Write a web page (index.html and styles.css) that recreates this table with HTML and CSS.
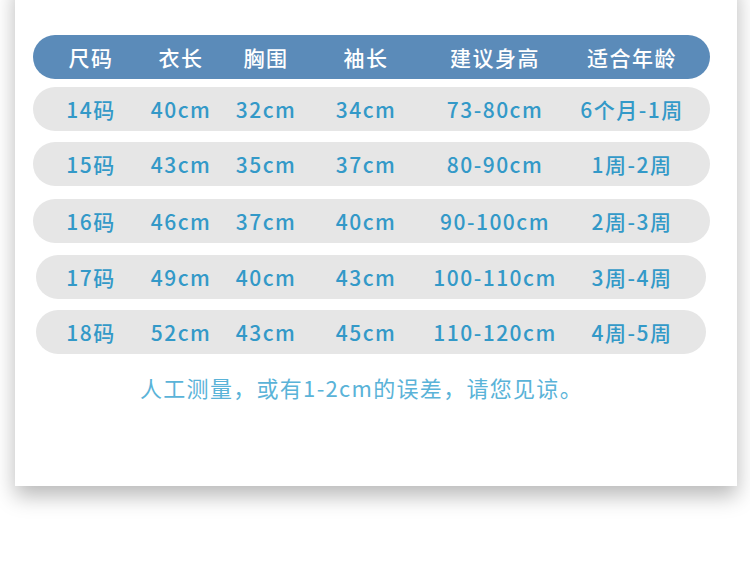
FILE: index.html
```html
<!DOCTYPE html>
<html lang="zh-CN">
<head>
<meta charset="utf-8">
<title>尺码表</title>
<link rel="stylesheet" href="styles.css">
</head>
<body>
<div class="card">
  <div class="thead">
    <div class="cell">尺码</div>
    <div class="cell">衣长</div>
    <div class="cell">胸围</div>
    <div class="cell">袖长</div>
    <div class="cell">建议身高</div>
    <div class="cell">适合年龄</div>
  </div>
  <div class="row row--g8">
    <div class="cell">14码</div>
    <div class="cell">40cm</div>
    <div class="cell">32cm</div>
    <div class="cell">34cm</div>
    <div class="cell">73-80cm</div>
    <div class="cell">6个月-1周</div>
  </div>
  <div class="row row--g11">
    <div class="cell">15码</div>
    <div class="cell">43cm</div>
    <div class="cell">35cm</div>
    <div class="cell">37cm</div>
    <div class="cell">80-90cm</div>
    <div class="cell">1周-2周</div>
  </div>
  <div class="row row--g13">
    <div class="cell">16码</div>
    <div class="cell">46cm</div>
    <div class="cell">37cm</div>
    <div class="cell">40cm</div>
    <div class="cell">90-100cm</div>
    <div class="cell">2周-3周</div>
  </div>
  <div class="row row--g12 row--narrow">
    <div class="cell">17码</div>
    <div class="cell">49cm</div>
    <div class="cell">40cm</div>
    <div class="cell">43cm</div>
    <div class="cell">100-110cm</div>
    <div class="cell">3周-4周</div>
  </div>
  <div class="row row--g11 row--narrow">
    <div class="cell">18码</div>
    <div class="cell">52cm</div>
    <div class="cell">43cm</div>
    <div class="cell">45cm</div>
    <div class="cell">110-120cm</div>
    <div class="cell">4周-5周</div>
  </div>
  <p class="note">人工测量，或有1-2cm的误差，请您见谅。</p>
</div>
</body>
</html>
```

FILE: styles.css
```css
html, body {
  margin: 0;
  padding: 0;
  background: #ffffff;
  overflow: hidden;
}

body {
  width: 750px;
  height: 579px;
  font-family: "Noto Sans CJK SC", "Noto Sans", sans-serif;
}

.card {
  box-sizing: border-box;
  margin: -20px 13px 0 15px;
  height: 506px;
  padding: 55px 27px 0 18px;
  background: #ffffff;
  box-shadow: 0 10px 20px rgba(0, 0, 0, 0.28);
}

.thead,
.row {
  display: grid;
  grid-template-columns: 90px 90px 80px 120px 138px 136px;
  align-items: center;
  box-sizing: border-box;
  height: 44px;
  padding-left: 13px;
  border-radius: 22px;
}

.thead {
  background: #5b8bb9;
  color: #ffffff;
  font-size: 21px;
  font-weight: 500;
  letter-spacing: 1.5px;
}

.row {
  background: #e6e6e6;
  color: #3399c8;
  font-size: 21px;
  font-weight: 500;
  letter-spacing: 1.5px;
}

.cell {
  text-align: center;
  line-height: 44px;
  white-space: nowrap;
}

.row--g8 { margin-top: 8px; }
.row--g11 { margin-top: 11px; }
.row--g12 { margin-top: 12px; }
.row--g13 { margin-top: 13px; }

.row--narrow {
  margin-left: 3px;
  margin-right: 4px;
  padding-left: 10px;
}

.note {
  margin: 18px 20px 0 0;
  text-align: center;
  color: #5ab3d8;
  font-size: 22px;
  line-height: 30px;
  letter-spacing: 1.3px;
}
```
